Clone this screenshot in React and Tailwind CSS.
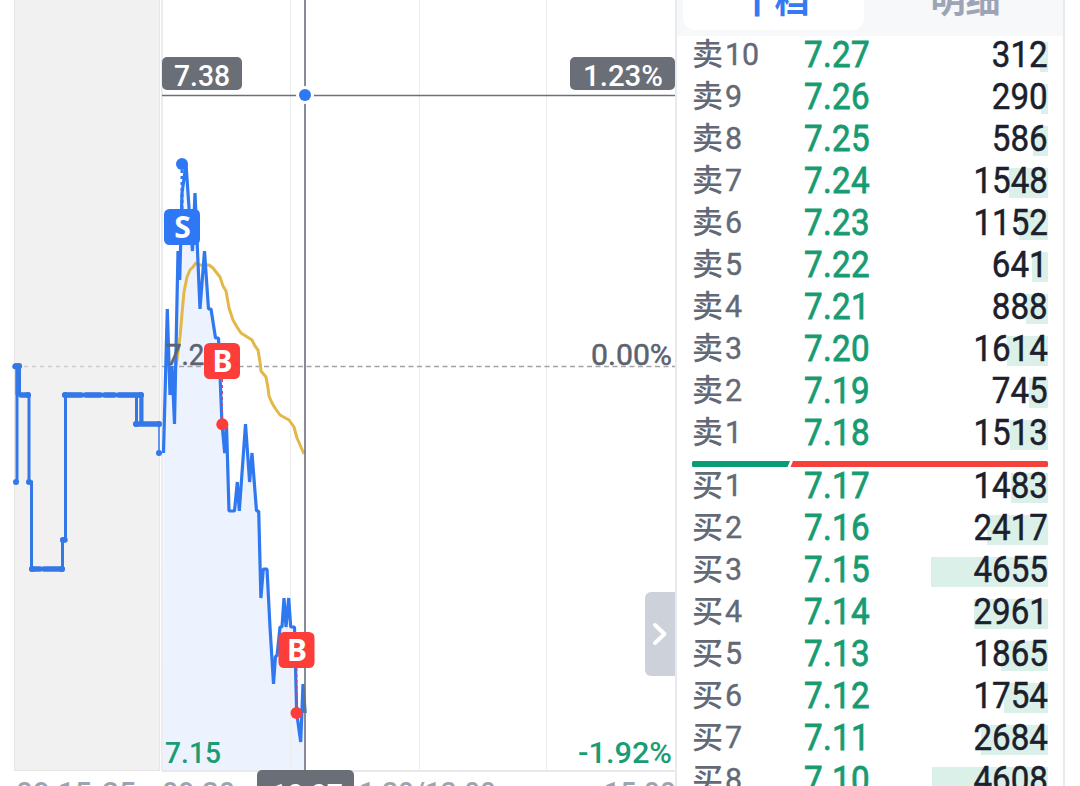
const asks = [
  ['10', '7.27', 312],
  ['9', '7.26', 290],
  ['8', '7.25', 586],
  ['7', '7.24', 1548],
  ['6', '7.23', 1152],
  ['5', '7.22', 641],
  ['4', '7.21', 888],
  ['3', '7.20', 1614],
  ['2', '7.19', 745],
  ['1', '7.18', 1513],
]

const bids = [
  ['1', '7.17', 1483],
  ['2', '7.16', 2417],
  ['3', '7.15', 4655],
  ['4', '7.14', 2961],
  ['5', '7.13', 1865],
  ['6', '7.12', 1754],
  ['7', '7.11', 2684],
  ['8', '7.10', 4608],
]

const MAX_VOLUME = 4655

const pricePoints =
  '163.5,453 167.3,309 170,395 172,366 174.5,424 178,251 179.7,280 182,193 186,164 190,222 192.5,251 195,193 200,309 204.5,251 208.5,309 211,309 215.5,338 218.5,338 222,424 224.7,453 226.5,424 229,511 234.5,511 237.3,482 239.3,511 245.5,424 249.6,482 252,453 256.5,511 258.7,511 260.9,598 263.3,569 267,569 270,627 273.5,684 275.5,656 277,656 280,627 282,627 284,598 286,627 288.7,598 290.7,627 294.5,627 296.7,713 300.7,742 303,684 305.2,713'

const averagePoints =
  '174,375 177,360 180,337 182.5,308 184,292 187,277 190,270 193,267 196,263 200,265 209,265 213,268 216,272 220,277 223,286 226,291 229,308 233,320 237,327 241,333 252,340 255,346 258,350 260,362 261,371 266,377 268,388 269,396 272,403 275,408 280,415 289,420 294,427 297,438 304,454'

const auctionDots = [
  [16, 482], [29, 482], [32, 569], [62, 569], [63, 540], [65, 395], [136, 424], [141, 395], [159, 424], [159, 453], [16, 366], [19, 366], [28, 395],
]

function Label({ x, y, width, size = 29, fill, weight = 500, children }) {
  return (
    <text x={x} y={y} textLength={width} lengthAdjust="spacingAndGlyphs" fontSize={size} fontWeight={weight} fill={fill}>
      {children}
    </text>
  )
}

function Marker({ x, y, fill, children }) {
  return (
    <g>
      <rect x={x} y={y} width="36" height="36" rx="5.5" fill={fill} />
      <text x={x + 18.5} y={y + 28.5} textAnchor="middle" fontSize="30" fontWeight="700" fill="#fff" className="font-['Noto_Sans',sans-serif]">
        {children}
      </text>
    </g>
  )
}

function Chart() {
  return (
    <svg width="675" height="786" viewBox="0 0 675 786" className="block font-['Roboto',sans-serif]">
      <rect x="14" y="0" width="146" height="771" fill="#f1f1f1" />
      <path d="M14.5 0V771M159.5 0V770.5H14" fill="none" stroke="#e6e6e6" />
      <path d="M162 0V771" stroke="#ececee" strokeWidth="2" />
      <polygon points={`163,771 ${pricePoints} 305.2,771`} fill="#edf3fe" />
      <path d="M290.5 0V771M419.5 0V771M546.5 0V771" stroke="#ededf0" />
      <path d="M162 771H675" stroke="#e9e9ec" strokeWidth="2" />
      <path d="M24 366.5H160" stroke="#cfcfcf" strokeWidth="1.3" strokeDasharray="4 4" />
      <path d="M162 366.5H675" stroke="#a2a2a6" strokeWidth="1.5" strokeDasharray="5 3.5" />

      <polyline points={averagePoints} fill="none" stroke="#e2b848" strokeWidth="3" strokeLinejoin="round" />
      <g fill="none" stroke="#3478e8">
        <path d="M17 482V366H19.5V395H29V482H31.5V569H62.5V540H65.5V395H136.5V424H141V395" strokeWidth="3" />
        <path d="M17.5 366V395M141.5 395V424" strokeWidth="4" />
        <path d="M65 395H141" strokeWidth="4.5" />
        <path
          d="M15 366.5H19M21 395H28M32 569H40M44 569H62M63 540H65M65 395H81M86 395H100M105 395H114M119 395H141M136 424H159"
          strokeWidth="5.5"
          strokeLinecap="round"
        />
        <path d="M159 424V453" strokeWidth="1.5" />
        <polyline points={pricePoints} stroke="#2f78f0" strokeWidth="3.2" strokeLinejoin="bevel" />
      </g>
      {auctionDots.map(([x, y]) => (
        <circle key={`${x}-${y}`} cx={x} cy={y} r="3" fill="#3478e8" />
      ))}

      <g stroke="#5c6370" strokeWidth="0.5">
        <Label x={166} y={364.5} width={54} fill="#5c6370" weight={400}>7.29</Label>
        <Label x={591} y={364.5} width={81} fill="#5c6370" weight={400}>0.00%</Label>
      </g>
      <Label x={165} y={763} width={56} fill="#1a9c74">7.15</Label>
      <Label x={578} y={763} width={94} fill="#1a9c74">-1.92%</Label>

      <Label x={16} y={803} width={120} fill="#9ca4b4">09:15-25</Label>
      <Label x={162} y={803} width={73} fill="#9ca4b4">09:30</Label>
      <Label x={343} y={803} width={153} fill="#9ca4b4">11:30/13:00</Label>
      <Label x={604} y={803} width={72} fill="#9ca4b4">15:00</Label>

      <path d="M182 164V209" stroke="#2f78f5" strokeWidth="3" strokeDasharray="3 3" />
      <path d="M222.5 379V424M297 668V713" stroke="#d84862" strokeWidth="1" strokeDasharray="3 3" />

      <path d="M162 95.5H675M305 0V771" stroke="#6b707b" strokeWidth="1.6" />
      <circle cx="305" cy="95" r="9" fill="#fff" />
      <circle cx="305" cy="95" r="6" fill="#2f78f5" />

      <rect x="162" y="57" width="80" height="33" rx="5" fill="#6a6e77" />
      <Label x={174} y={86} width={56} fill="#fff">7.38</Label>
      <rect x="570" y="57" width="105" height="33" rx="5" fill="#6a6e77" />
      <Label x={583} y={86} width={80} fill="#fff">1.23%</Label>
      <rect x="257" y="770" width="97" height="40" rx="5" fill="#6a6e77" />
      <Label x={271} y={805} width={72} fill="#fff">10:07</Label>

      <circle cx="182" cy="164" r="6" fill="#2f78f5" />
      <circle cx="222.3" cy="424.3" r="6" fill="#fc3d39" />
      <circle cx="296.5" cy="713" r="6" fill="#fc3d39" />
      <Marker x={164} y={209} fill="#2f78f5">S</Marker>
      <Marker x={204} y={343} fill="#fc3d39">B</Marker>
      <Marker x={278.5} y={632} fill="#fc3d39">B</Marker>

      <path d="M675 592H651a6 6 0 0 0-6 6V670a6 6 0 0 0 6 6H675Z" fill="#cdd1da" />
      <path d="M655 625L664.5 634L655 643" fill="none" stroke="#fff" strokeWidth="4" strokeLinecap="round" strokeLinejoin="round" />
    </svg>
  )
}

function OrderRow({ side, level, price, volume }) {
  return (
    <div className="relative flex h-[42px] shrink-0 leading-[38px]">
      <div
        className="absolute top-[6px] right-0 h-[30px] bg-[#daf0e9]"
        style={{ width: Math.round((volume / MAX_VOLUME) * 117) }}
      />
      <div className="relative flex w-[112px] text-[#636976]">
        <span className="w-[33px] font-['Noto_Sans_CJK_SC',sans-serif] text-[31px] leading-[31px] font-medium">{side}</span>
        <span className="origin-left scale-x-[0.95] text-[32px] leading-[36px] [-webkit-text-stroke:0.4px]">{level}</span>
      </div>
      <span className="relative origin-left scale-x-[0.92] text-[36px] tracking-[0.4px] text-[#179b72] [-webkit-text-stroke:0.8px]">{price}</span>
      <span className="relative ml-auto origin-right scale-x-[0.92] text-[36px] text-[#1b202c] [-webkit-text-stroke:0.5px]">{volume}</span>
    </div>
  )
}

function OrderBook() {
  return (
    <aside className="flex h-full w-[390px] flex-col border-x-2 border-[#e9eaed] bg-white">
      <div className="flex h-9 shrink-0 bg-[#f7f8fa] pl-1.5 font-['Noto_Sans_CJK_SC',sans-serif] text-[35px] font-bold">
        <div className="flex h-[30px] w-[181px] items-end justify-center rounded-b-xl bg-white pl-0.5 text-[#3478f2]">
          <span className="mb-[17px] h-[30px] leading-[30px]">十档</span>
        </div>
        <div className="flex h-[30px] flex-1 items-end justify-center pl-1 text-[#9ca4b6]">
          <span className="mb-[17px] h-[30px] leading-[30px]">明细</span>
        </div>
      </div>
      <div className="flex flex-col pr-[15px] pl-[15px] font-['Roboto',sans-serif]">
        {asks.map(([level, price, volume]) => (
          <OrderRow key={level} side="卖" level={level} price={price} volume={volume} />
        ))}
        <div className="flex h-[11px] shrink-0 items-end">
          <svg width="356" height="6" viewBox="0 0 356 6" className="block">
            <path d="M1.5 0H98L95.500 6H1.500A1.500 1.500 0 0 1 0 4.500V1.500A1.500 1.500 0 0 1 1.500 0Z" fill="#0a9c74" />
            <path d="M101 0H354.500A1.500 1.500 0 0 1 356 1.500V4.500A1.500 1.500 0 0 1 354.500 6H98.500Z" fill="#f5413c" />
          </svg>
        </div>
        {bids.map(([level, price, volume]) => (
          <OrderRow key={level} side="买" level={level} price={price} volume={volume} />
        ))}
      </div>
    </aside>
  )
}

export default function App() {
  return (
    <main className="flex h-[786px] w-[1080px] overflow-hidden bg-white">
      <Chart />
      <OrderBook />
    </main>
  )
}
